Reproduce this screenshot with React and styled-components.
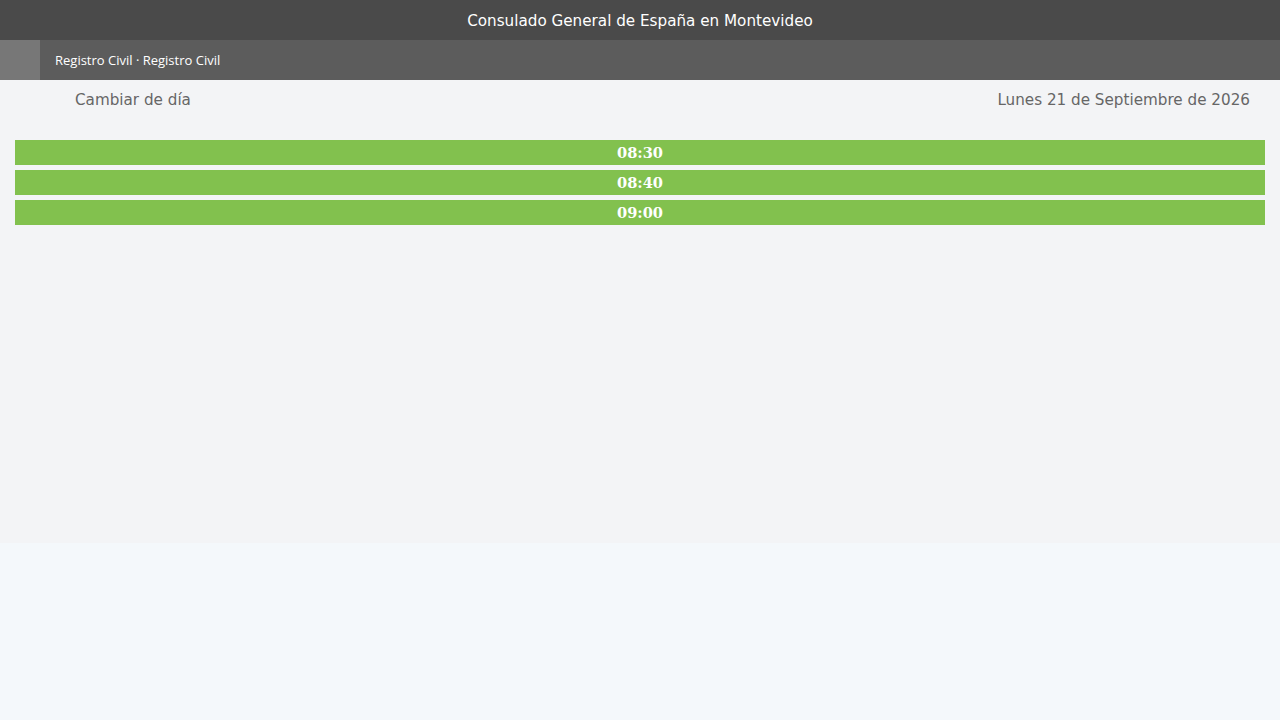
import React from "react";
import styled, { createGlobalStyle } from "styled-components";

const Global = createGlobalStyle`
  html, body { margin: 0; padding: 0; background: #f4f8fb; }
  body { font-family: "DejaVu Sans", Verdana, sans-serif; }
`;

const TopBar = styled.header`
  height: 40px;
  background: #4a4a4a;
  color: #ffffff;
  display: flex;
  align-items: center;
  justify-content: center;
  font-size: 15.2px;
  padding-top: 1px;
  box-sizing: border-box;
`;

const SubBar = styled.nav`
  height: 40px;
  background: #5c5c5c;
  display: flex;
  align-items: center;
`;

const HomeSquare = styled.div`
  width: 40px;
  height: 40px;
  background: #777777;
`;

const Crumbs = styled.span`
  margin-left: 15px;
  color: #ffffff;
  font-family: "Open Sans", "Noto Sans", sans-serif;
  font-size: 13px;
`;

const Main = styled.main`
  height: 463px;
  background: #f3f4f6;
  box-sizing: border-box;
`;

const DayRow = styled.div`
  height: 40px;
  display: flex;
  align-items: center;
  justify-content: space-between;
  padding: 0 30px 0 75px;
  color: #666666;
  font-size: 15.2px;
`;

const Slots = styled.div`
  display: flex;
  flex-direction: column;
  gap: 5px;
  padding: 20px 15px 0;
`;

const Slot = styled.div`
  height: 25px;
  background: #82c14e;
  color: #ffffff;
  display: flex;
  align-items: center;
  justify-content: center;
  font-family: "DejaVu Serif", serif;
  font-weight: bold;
  font-size: 14.6px;
  cursor: pointer;
`;

const times = ["08:30", "08:40", "09:00"];

export default function App() {
  return (
    <>
      <Global />
      <TopBar>Consulado General de España en Montevideo</TopBar>
      <SubBar>
        <HomeSquare />
        <Crumbs>Registro Civil · Registro Civil</Crumbs>
      </SubBar>
      <Main>
        <DayRow>
          <span>Cambiar de día</span>
          <span>Lunes 21 de Septiembre de 2026</span>
        </DayRow>
        <Slots>
          {times.map((t) => (
            <Slot key={t}>{t}</Slot>
          ))}
        </Slots>
      </Main>
    </>
  );
}
